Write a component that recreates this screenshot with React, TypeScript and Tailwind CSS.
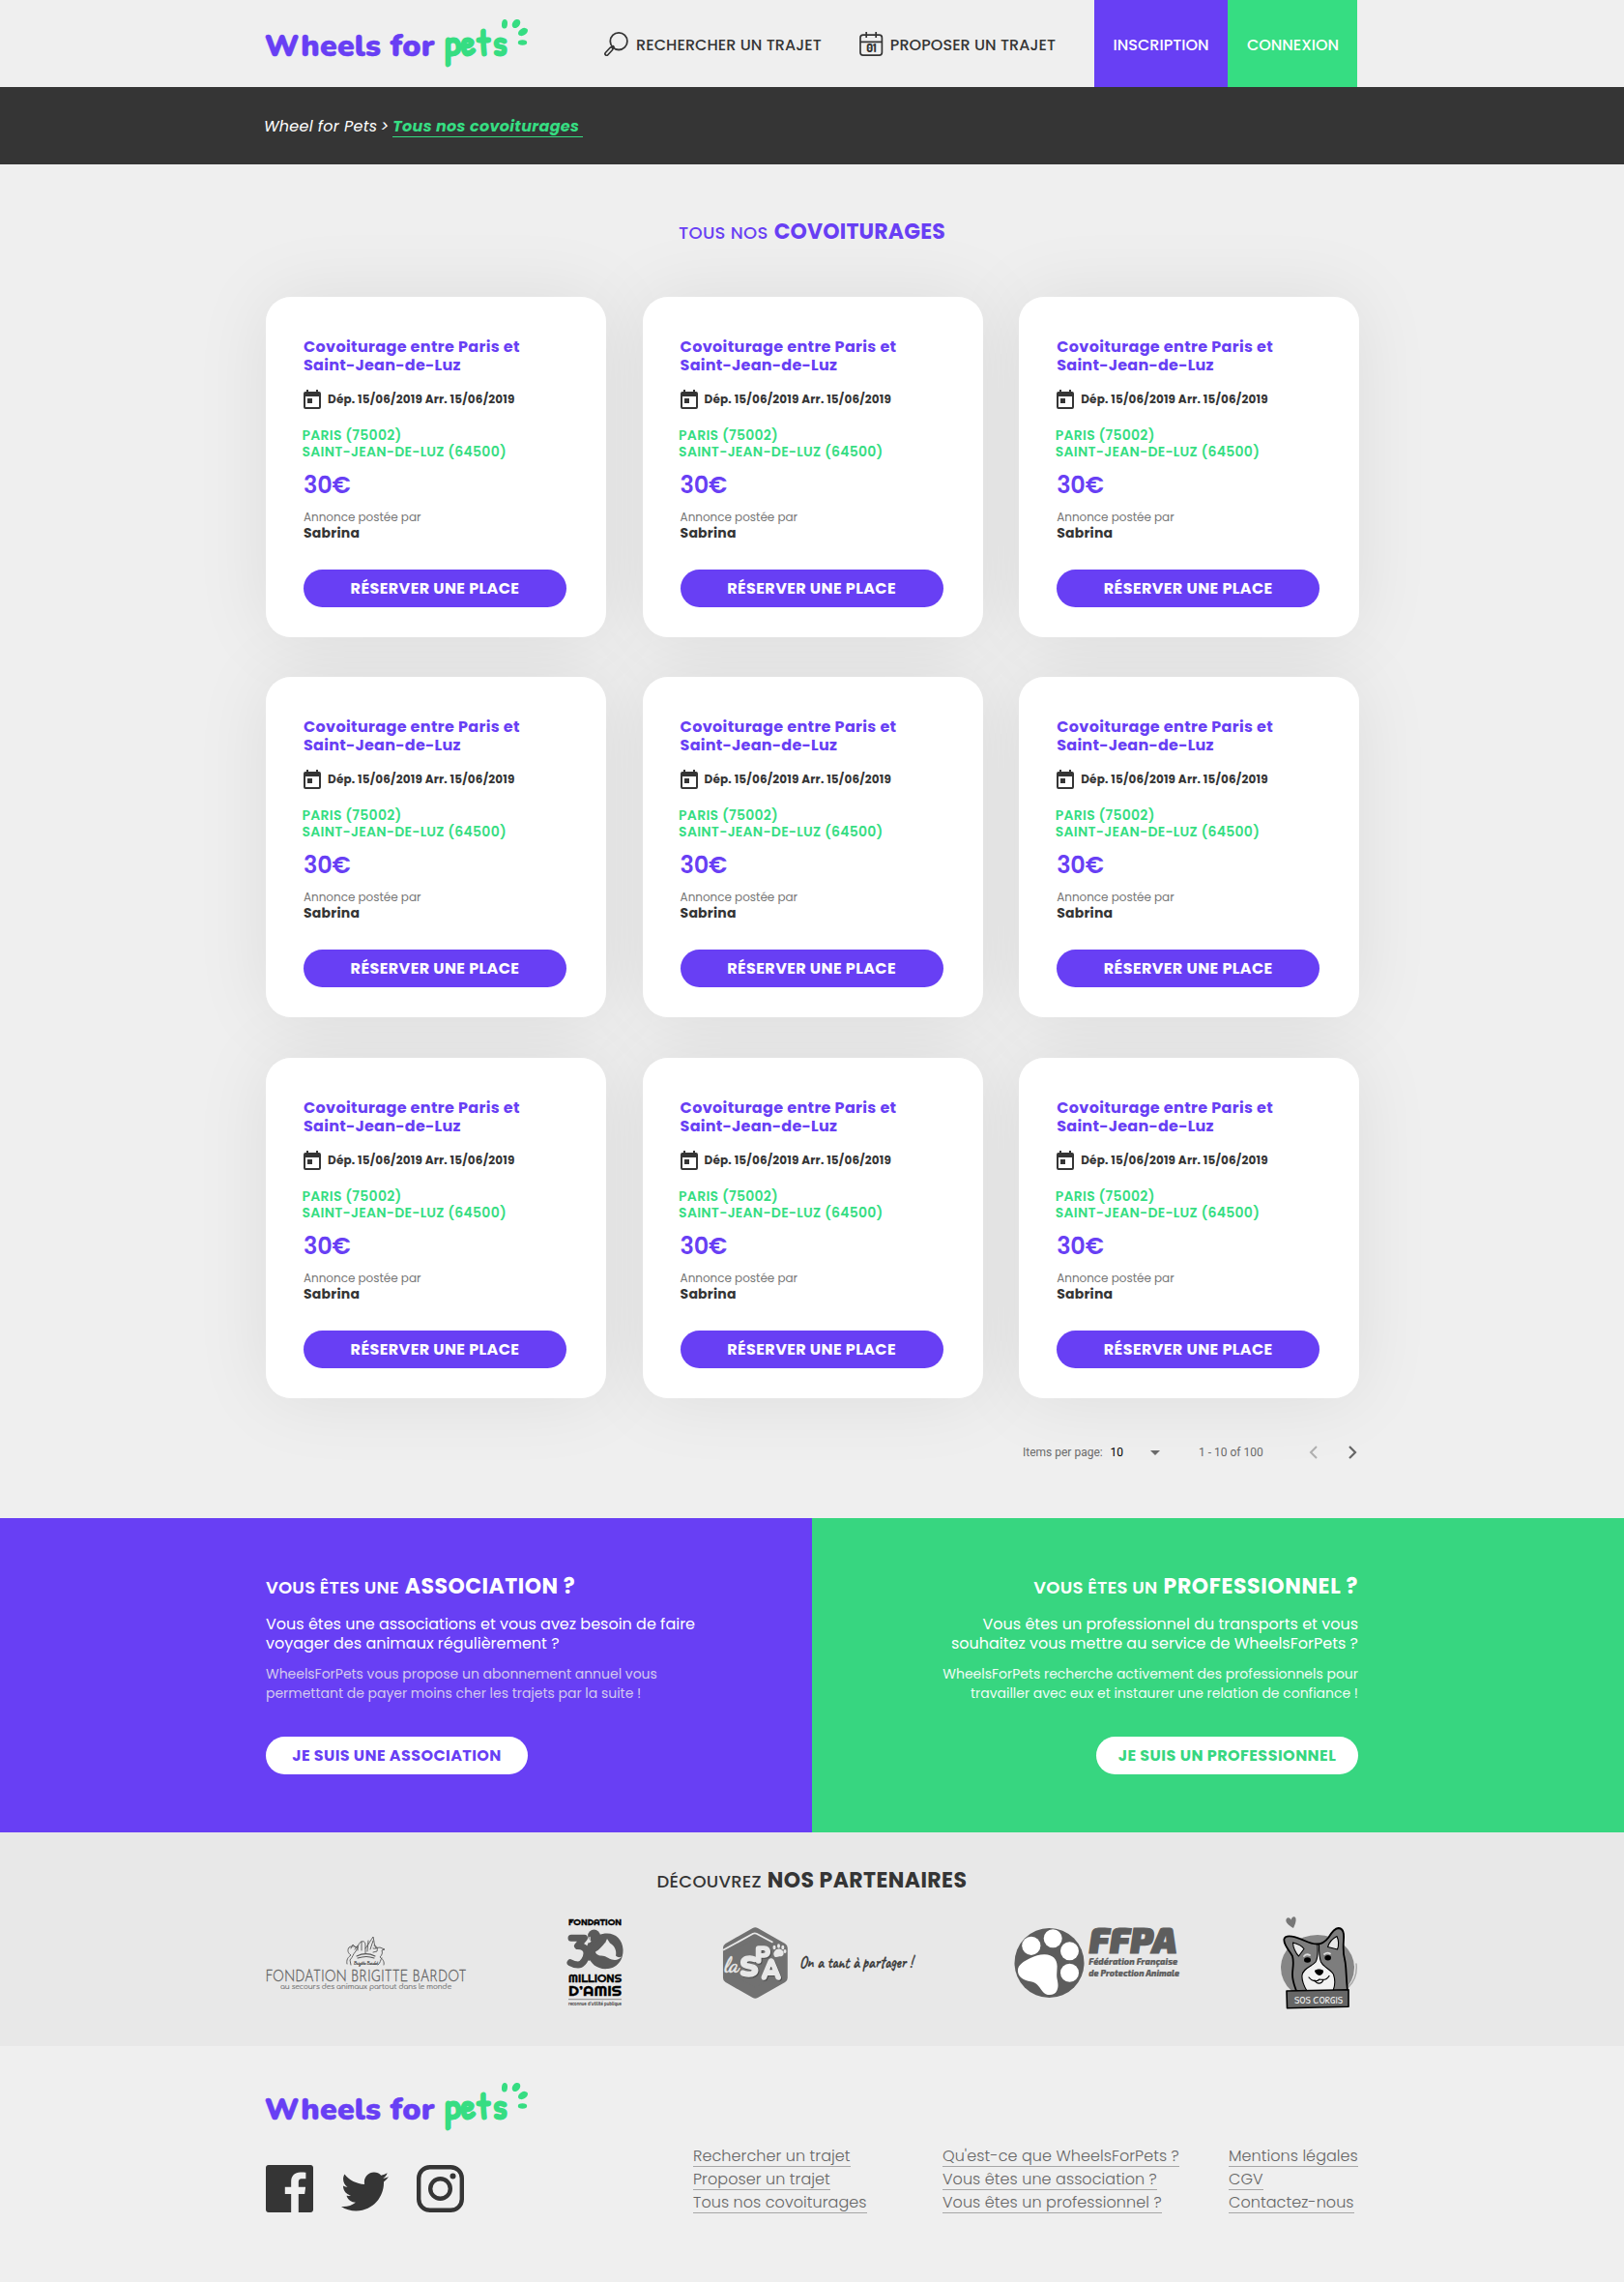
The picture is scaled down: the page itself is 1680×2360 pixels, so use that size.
import type { ReactNode } from 'react';
import { FaTwitter } from 'react-icons/fa';

function Logo() {
  return (
    <svg viewBox="0 0 280 54" className="-ml-[3px] block h-[54px] w-[280px] shrink-0 overflow-visible">
      <text x="1.6" y="40" textLength="176" className="fill-[#683ff4] stroke-[#683ff4] stroke-[0.4] font-[family-name:Nunito,Lato,sans-serif] text-[32px] font-black">
        Wheels for
      </text>
      <text
        x="188.5 205 221.5 238"
        y="39"
        className="fill-[#36dd82] stroke-[#36dd82] stroke-[2.8] font-[family-name:'Patrick_Hand',Nunito,cursive] text-[37px] [stroke-linejoin:round]"
      >
        pets
      </text>
      <g className="fill-[#36dd82]">
        <ellipse cx="250" cy="6.7" rx="3" ry="4.8" transform="rotate(5 250 6.7)" />
        <ellipse cx="262" cy="6.5" rx="3.8" ry="5" transform="rotate(38 262 6.5)" />
        <ellipse cx="269" cy="15" rx="3.6" ry="5.4" transform="rotate(60 269 15)" />
        <ellipse cx="268.5" cy="26" rx="4.7" ry="2.8" />
      </g>
    </svg>
  );
}

function SearchIcon() {
  return (
    <svg viewBox="0 0 25 25" className="h-[25px] w-[25px]" fill="none" strokeLinecap="round">
      <circle cx="15.1" cy="9.7" r="8.8" stroke="#353535" strokeWidth="1.8" />
      <path d="M9.2 15.6 7.6 17.2" stroke="#353535" strokeWidth="3.4" />
      <path d="M7.2 17.6 2.6 22.6" stroke="#353535" strokeWidth="5" />
      <path d="M7.2 17.6 2.6 22.6" stroke="#efefef" strokeWidth="1.7" />
    </svg>
  );
}

function CalendarIcon() {
  return (
    <svg viewBox="0 0 25 25" className="h-[25px] w-[25px]" fill="none" stroke="#353535" strokeWidth="1.7">
      <rect x="1" y="3.2" width="22.4" height="20.9" rx="2.8" />
      <path d="M1 10.4h22.4M7.2 0v6M17.2 0v6" />
      <text x="12.4" y="21.2" textAnchor="middle" stroke="none" className="fill-[#353535] font-[family-name:Dosis,Inter,sans-serif] text-[12px] font-extrabold">
        01
      </text>
    </svg>
  );
}

function DateIcon() {
  return (
    <svg viewBox="0 0 18 20" className="h-[20px] w-[18px]">
      <path
        fill="#353535"
        fillRule="evenodd"
        d="M3 0h2v2h8V0h2v2h1a2 2 0 0 1 2 2v14a2 2 0 0 1-2 2H2a2 2 0 0 1-2-2V4a2 2 0 0 1 2-2h1zM2 7v11h14V7zM4 9h5v5H4z"
      />
    </svg>
  );
}

function RideCard() {
  return (
    <li className="relative h-[352px] rounded-[26px] bg-white px-[39px] pt-[42px] nth-[n+7]:mt-px before:absolute before:inset-0 before:-z-10 before:rounded-[26px] before:shadow-[0_0_80px_rgba(0,0,0,0.08)] before:content-['']">
      <h3 className="text-[16px] leading-[19px] font-bold tracking-[0.35px] text-[#683ff4]">
        Covoiturage entre Paris et
        <br />
        <span className="tracking-[0.25px]">Saint-Jean-de-Luz</span>
      </h3>
      <div className="mt-4 flex items-center text-[12px] leading-[20px] font-bold tracking-[0.17px] text-[#353535]">
        <DateIcon />
        <span className="ml-[7px] whitespace-nowrap">Dép. 15/06/2019 Arr. 15/06/2019</span>
      </div>
      <p className="mt-[19px] -ml-[1.5px] text-[14px] leading-[17px] font-semibold tracking-[0.26px] text-[#36dd82]">
        PARIS (75002)
        <br />
        SAINT-JEAN-DE-LUZ (64500)
      </p>
      <p className="mt-[14px] text-[24px] leading-[24px] font-semibold tracking-[-0.2px] text-[#683ff4]">30€</p>
      <p className="mt-[13px] text-[12px] leading-[16px] tracking-[-0.03px] text-[#777]">Annonce postée par</p>
      <p className="text-[14px] leading-[16px] font-bold tracking-[0.2px] text-[#353535]">Sabrina</p>
      <button className="mt-[30px] h-[39px] w-[272px] rounded-full bg-[#683ff4] text-[16px] leading-[39px] font-bold tracking-[0.39px] text-white">
        RÉSERVER UNE PLACE
      </button>
    </li>
  );
}

function Pagination() {
  return (
    <div className="mt-[44px] ml-[783px] flex h-6 items-center font-[family-name:Roboto,sans-serif] text-[12px] text-[#6b6b6b]">
      <span className="w-[90.5px] whitespace-nowrap">Items per page:</span>
      <span className="w-[41.5px] text-black">10</span>
      <svg viewBox="0 0 10 5" className="h-[5px] w-[10px]" fill="#6b6b6b">
        <path d="M0 0h10L5 5z" />
      </svg>
      <span className="ml-[40px] w-[114px] whitespace-nowrap">1 - 10 of 100</span>
      <svg viewBox="0 0 9 14" className="h-[14px] w-[9px]" fill="none" stroke="#b0b0b0" strokeWidth="2">
        <path d="M8 1 2 7l6 6" />
      </svg>
      <svg viewBox="0 0 9 14" className="ml-[32px] h-[14px] w-[9px]" fill="none" stroke="#666" strokeWidth="2.2">
        <path d="m1 1 6 6-6 6" />
      </svg>
    </div>
  );
}

function BardotLogo() {
  return (
    <svg viewBox="0 0 208 100" className="h-[100px] w-[208px] overflow-visible" fill="none" stroke="#555" strokeWidth="0.9" strokeLinecap="round" strokeLinejoin="round">
      <path d="M84 50c-1-4 1-7 4-9-3-2-4-5-2-8 3-2 6-1 9 0l-2 4c-3 3-3 6-6 9l1 5M122 51c1-3-1-6-4-8 2-2 3-4 2-7l3-1-5-2c-3 0-5 2-7 1M120 44c-2 2-1 5-4 7M88 34l2-4 3 3" />
      <path d="M95 36c0-4 1-8 4-9 3-1 4 1 4 4v8M99 27v9M103 34c3-4 6-9 8-12 1 4 1 9 3 12M105 37l1-11M108 35l3-9M95 31l-3 4M112 31c3 0 4 3 3 6l-4 1" />
      <path d="M94 42c6-3 13-3 19 0M95 44c6-2 12-2 17 0" strokeWidth="1.1" />
      <text x="91" y="50.5" textLength="25" lengthAdjust="spacingAndGlyphs" stroke="#444" strokeWidth="0.2" className="fill-[#444] font-[family-name:'Dancing_Script',cursive] text-[5px] font-bold">
        Brigitte Bardot
      </text>
      <text x="-0.5" y="67.8" textLength="208" lengthAdjust="spacingAndGlyphs" stroke="#606060" strokeWidth="0.3" className="fill-[#606060] font-[family-name:'Josefin_Sans',Lato,sans-serif] text-[17px] font-light">
        FONDATION BRIGITTE BARDOT
      </text>
      <text x="15" y="76" textLength="177" lengthAdjust="spacingAndGlyphs" stroke="#808080" strokeWidth="0.2" className="fill-[#808080] font-[family-name:Comfortaa,Nunito,sans-serif] text-[7px]">
        au secours des animaux partout dans le monde
      </text>
    </svg>
  );
}

function MillionsLogo() {
  return (
    <svg viewBox="0 0 58 100" className="h-[100px] w-[58px] overflow-visible">
      <g className="fill-black stroke-black stroke-[0.35] font-[family-name:Righteous,Nunito,sans-serif]">
        <text x="1" y="9.8" textLength="55" lengthAdjust="spacingAndGlyphs" className="text-[9px]">FONDATION</text>
        <text x="1" y="69.3" textLength="55" lengthAdjust="spacingAndGlyphs" className="text-[11px]">MILLIONS</text>
        <text x="1" y="83.3" textLength="55" lengthAdjust="spacingAndGlyphs" className="text-[14.6px]">D’AMIS</text>
      </g>
      <path d="M4 23.3h13.5L10.5 31.5c6 0 9.5 3 9.5 7.6S16 51 11 51c-3.5 0-5.5-.7-8-2.2" fill="none" stroke="#5a5a5a" strokeWidth="7" strokeLinecap="round" strokeLinejoin="round" />
      <path d="M22 44c4 8 11 12 20 11C52 54 58 45 57.5 35 57 25 50 18.5 41 18.5c-3 0-6 .5-9 2L22 29z" fill="#5a5a5a" />
      <circle cx="27.5" cy="21" r="6.4" fill="#5a5a5a" />
      <path d="M24 29c-3 5-3 11 0 17" fill="none" stroke="#5a5a5a" strokeWidth="5" />
      <path d="M39 28.5 41 24l3 4.5c5 3 7 8 6 13 2 2 4 2 6 1-2 3-6 4-10 3-4-1-6-4-11-4-3 0-6-2-6-4 4-2 7-6 10-9.5z" fill="#e8e8e8" />
      <path d="M22 28c1.5-2 1.5-4 1-6" fill="none" stroke="#e8e8e8" strokeWidth="1.3" />
      <path d="M1 86.7h55" stroke="#888" strokeWidth="1" />
      <text x="1" y="92.6" textLength="55" lengthAdjust="spacingAndGlyphs" className="fill-[#333] font-[family-name:Nunito,sans-serif] text-[5px] font-bold">
        reconnue d’utilité publique
      </text>
    </svg>
  );
}

function SpaLogo() {
  return (
    <svg viewBox="1 0 197 100" className="h-[100px] w-[197px] overflow-visible">
      <path d="M33.3 17.5 61.5 33.5v31L33.3 80.5 5.2 64.5v-31z" fill="#717171" stroke="#717171" strokeWidth="10.5" strokeLinejoin="round" />
      <path d="M0 35.8 31 18.8q1.8-1 3.6 0L51.5 27.8" fill="none" stroke="#e8e8e8" strokeWidth="1.8" />
      <text x="1.5" y="58.3" textLength="15" lengthAdjust="spacingAndGlyphs" className="fill-[#e8e8e8] stroke-[#e8e8e8] stroke-[0.4] font-[family-name:'Dancing_Script',cursive] text-[23px] font-bold">
        la
      </text>
      <g
        fill="#e8e8e8"
        stroke="#e8e8e8"
        strokeWidth="1.4"
        strokeLinejoin="round"
        className="font-[family-name:Nunito,sans-serif] font-black drop-shadow-[1px_1px_0_#4d4d4d]"
      >
        <text x="17" y="63.2" className="text-[30px]">S</text>
        <text x="33" y="49" className="text-[23.5px]">P</text>
        <text x="39.8" y="65.5" textLength="20" lengthAdjust="spacingAndGlyphs" className="text-[29px]">A</text>
      </g>
      <g fill="#e8e8e8">
        <path d="M52.5 41c-1-3 2-6.5 5-6.5s6 2.5 5 5.5-3.5 2-5 2.5-4 1.500-5-1.500z" />
        <ellipse cx="53" cy="33" rx="1.5" ry="2.2" />
        <ellipse cx="57.5" cy="31.5" rx="1.5" ry="2.2" />
        <ellipse cx="61.8" cy="33" rx="1.5" ry="2.2" />
        <ellipse cx="64" cy="37" rx="1.5" ry="2" />
      </g>
      <text x="79" y="54" textLength="117" lengthAdjust="spacingAndGlyphs" className="fill-[#3c3c3c] stroke-[#3c3c3c] stroke-[0.25] font-[family-name:Caveat,cursive] text-[18.5px] font-bold">
        On a tant à partager !
      </text>
    </svg>
  );
}

function FfpaLogo() {
  return (
    <svg viewBox="0.5 0 171 100" className="h-[100px] w-[171px] overflow-visible">
      <circle cx="36" cy="49" r="36" fill="#5d5d5d" />
      <g fill="#fff">
        <circle cx="17.3" cy="31.3" r="9.6" />
        <circle cx="39.7" cy="23.7" r="9.5" />
        <circle cx="57" cy="36.7" r="9.5" />
        <circle cx="57" cy="59.3" r="9.5" />
        <path d="M3.4 57c0-6 6-9.5 13-13 5-2.5 10-4 15-3.8 8 .3 12.500 4.500 12.700 12 .1 5-1 9 0 13.500 1 5 1.500 8-.3 12-2.500 5.500-11 6-15 .5-3.500-5-6-9-12-10-7-1-13.400-4.500-13.400-11.200z" />
      </g>
      <g className="fill-[#5d5d5d] font-[family-name:'Exo_2','Open_Sans',sans-serif] italic">
        <text x="77" y="39" textLength="91" lengthAdjust="spacingAndGlyphs" stroke="#5d5d5d" strokeWidth="1.2" className="text-[36px] font-black">
          FFPA
        </text>
        <text x="76.7" y="50.7" textLength="92" lengthAdjust="spacingAndGlyphs" stroke="#5d5d5d" strokeWidth="0.2" className="text-[10px] font-extrabold">
          Fédération Française
        </text>
        <text x="76.7" y="62.7" textLength="94" lengthAdjust="spacingAndGlyphs" stroke="#5d5d5d" strokeWidth="0.2" className="text-[10px] font-extrabold">
          de Protection Animale
        </text>
      </g>
    </svg>
  );
}

function CorgiLogo() {
  return (
    <svg viewBox="0 0 80 100" className="h-[100px] w-[80px] overflow-visible" strokeLinejoin="round" strokeLinecap="round">
      <ellipse cx="38" cy="54" rx="38" ry="34" fill="#868686" />
      <path d="M78 50c1 9-2 18-8 24" fill="none" stroke="#a8a8a8" strokeWidth="1.5" />
      <path d="M13 13C8 10 4.5 7 5.5 4c1-2.5 4-2 5 .5C11.5 1 14.5 0 15.5 3c.6 3-1 7-2.500 10z" fill="#777" />
      <path
        d="M16 78c-2-6-4-10-4-17 0-7 2-12 0-19C9 36 2 30 3.5 24c2-5 12-2 21 2 5 2.300 8 3.500 13 3.500 6 0 9-3 12-7 3-5 6-9 10-9.500 5 0 6 5 5.500 12-.5 8-1 13 1 20 2 8 1 15 3 33z"
        fill="#7d7d7d"
        stroke="#000"
        strokeWidth="1.8"
      />
      <path d="M12.5 28c4 1 9 3 11.5 6.5L18.5 42c-3-3-6-9-6-14zM58 21.5c-4 2-8 6-9.5 11l10 2.5c1.5-4 1.5-9-.5-13.5z" fill="#e8e8e8" stroke="#000" strokeWidth="1.1" />
      <path d="M38 30c0 7 1 13-2 18-4 5-13 6-14 14-.5 6 2 11 5 16h27c2-5 2.5-11 .5-17-2-5-10-7-13-13-2-5-2-11-2-18z" fill="#f2f2f2" stroke="#000" strokeWidth="1.1" />
      <path d="M24 42q2.500-3 6-1M45 40q3-2.500 6-.5" fill="none" stroke="#ddd" strokeWidth="1.8" />
      <ellipse cx="27.5" cy="46" rx="3.5" ry="2.7" />
      <ellipse cx="48.7" cy="43.8" rx="3.3" ry="2.7" />
      <path d="M35 57c2-2 7-2 9 0 .5 2-2 5-4 5s-5-3-5-5z" />
      <path d="M29 64c3 4 8 5 11 2 4 1 8 0 10-3.500M35 67c2 4 7 4.500 9-.5" fill="none" stroke="#000" strokeWidth="1.2" />
      <path d="m6 78 64-1.300v17.500L6.500 95.800z" fill="#666" stroke="#000" strokeWidth="1.6" />
      <text x="14" y="90.5" textLength="50" lengthAdjust="spacingAndGlyphs" className="fill-[#f0f0f0] font-[family-name:'Patrick_Hand',Nunito,cursive] text-[10.5px]">
        SOS CORGIS
      </text>
    </svg>
  );
}

function FacebookIcon() {
  return (
    <svg viewBox="0 0 24 24" className="h-[49px] w-[49px]" fill="#353535">
      <path d="M22.676 0H1.324C.593 0 0 .593 0 1.324v21.352C0 23.408.593 24 1.324 24h11.494v-9.294H9.689v-3.621h3.129V8.410c0-3.099 1.894-4.785 4.659-4.785 1.325 0 2.464.097 2.796.141v3.240h-1.921c-1.500 0-1.792.721-1.792 1.771v2.311h3.584l-.465 3.630H16.560V24h6.115c.733 0 1.325-.592 1.325-1.324V1.324C24 .593 23.408 0 22.676 0" />
    </svg>
  );
}

function InstagramIcon() {
  return (
    <svg viewBox="0 0 49 49" className="h-[49px] w-[49px]" fill="none" stroke="#353535" strokeWidth="4.4">
      <rect x="2.2" y="2.2" width="44.6" height="44.6" rx="11.5" />
      <circle cx="24.5" cy="24.5" r="10.3" />
      <circle cx="37.5" cy="11.6" r="3" fill="#353535" stroke="none" />
    </svg>
  );
}

function SplitTitle({ light, bold, lightStyle, boldStyle }: { light: string; bold: string; lightStyle: string; boldStyle: string }) {
  return (
    <h2 className={`text-[22px] leading-[30px] font-bold whitespace-nowrap ${boldStyle}`}>
      <span className={`text-[18px] leading-none ${lightStyle}`}>{light}</span>
      {bold}
    </h2>
  );
}

function FooterLinks({ links, width }: { links: string[]; width: string }) {
  return (
    <ul className={width}>
      {links.map((link) => (
        <li key={link} className="flex h-6">
          <a className="h-[22px] border-b border-[#a6a6a6] text-[16px] leading-[21px] font-light tracking-[0.06px] whitespace-nowrap text-[#666]">{link}</a>
        </li>
      ))}
    </ul>
  );
}

function Container({ className, children }: { className: string; children: ReactNode }) {
  return <div className={`mx-auto w-[1130px] ${className}`}>{children}</div>;
}

export default function App() {
  return (
    <div className="w-[1680px] bg-[#efefef] font-[family-name:Poppins,Inter,sans-serif] text-[#353535]">
      <header>
        <Container className="flex h-[90px] items-center">
          <Logo />
          <nav className="ml-[73px] flex items-center pt-px text-[16px] leading-[24px] font-medium whitespace-nowrap">
            <SearchIcon />
            <span className="ml-2 pt-[3px] tracking-[0.07px]">RECHERCHER UN TRAJET</span>
            <span className="ml-[39px]">
              <CalendarIcon />
            </span>
            <span className="ml-[7px] pt-[3px] tracking-[0.07px]">PROPOSER UN TRAJET</span>
          </nav>
          <div className="mr-px ml-auto flex h-full text-center text-[16px] leading-[93px] font-medium text-white">
            <a className="w-[138px] bg-[#683ff4]">INSCRIPTION</a>
            <a className="w-[134px] bg-[#36dd82] pl-px">CONNEXION</a>
          </div>
        </Container>
      </header>

      <div className="bg-[#353535]">
        <Container className="flex h-[80px] items-start pt-[31px] text-[16px] leading-[20px] whitespace-nowrap text-white italic">
          <span className="-ml-[2px] tracking-[0.24px]">
            Wheel for Pets<span className="-ml-[2px]"> &gt;</span>
          </span>
          <a className="ml-[4px] border-b border-[#36dd82] font-bold tracking-[0.33px] text-[#36dd82]">Tous nos covoiturages&nbsp;</a>
        </Container>
      </div>

      <main className="h-[1400px] pt-[55px]">
        <div className="text-center text-[#683ff4]">
          <SplitTitle light="TOUS NOS" bold="COVOITURAGES" lightStyle="mr-[6px] font-medium tracking-[0.3px]" boldStyle="tracking-[0.18px]" />
        </div>
        <div className="ml-[275px] w-[1132px]">
          <ul className="isolate mt-[52px] grid grid-cols-[repeat(3,352px)] gap-x-[37.6px] gap-y-[41px]">
            {Array.from({ length: 9 }, (_, i) => (
              <RideCard key={i} />
            ))}
          </ul>
          <Pagination />
        </div>
      </main>

      <section className="flex h-[325px] text-white">
        <div className="w-[840px] bg-[#683ff4] pt-[56px] pl-[275px]">
          <SplitTitle light="VOUS ÊTES UNE" bold="ASSOCIATION ?" lightStyle="mr-[6px] font-semibold tracking-[0.22px]" boldStyle="tracking-[0.5px]" />
          <p className="mt-[14px] text-[16px] leading-[20px]">
            Vous êtes une associations et vous avez besoin de faire
            <br />
            voyager des animaux régulièrement ?
          </p>
          <p className="mt-[11px] text-[14px] leading-[20px] tracking-[-0.02px] text-[#d3c9ee]">
            WheelsForPets vous propose un abonnement annuel vous
            <br />
            permettant de payer moins cher les trajets par la suite !
          </p>
          <button className="mt-[35px] h-[39px] w-[271px] rounded-full bg-white text-[16px] leading-[39px] font-bold tracking-[0.4px] text-[#683ff4]">
            JE SUIS UNE ASSOCIATION
          </button>
        </div>
        <div className="w-[840px] bg-[#37d680] pt-[56px] pr-[275px] text-right">
          <SplitTitle light="VOUS ÊTES UN" bold="PROFESSIONNEL ?" lightStyle="mr-[6px] font-semibold tracking-[0.25px]" boldStyle="tracking-[0.62px]" />
          <p className="mt-[14px] text-[16px] leading-[20px]">
            Vous êtes un professionnel du transports et vous
            <br />
            souhaitez vous mettre au service de WheelsForPets ?
          </p>
          <p className="mt-[11px] text-[14px] leading-[20px] tracking-[-0.02px] text-[#effcf4]">
            WheelsForPets recherche activement des professionnels pour
            <br />
            travailler avec eux et instaurer une relation de confiance !
          </p>
          <button className="mt-[35px] h-[39px] w-[271px] rounded-full bg-white text-[16px] leading-[39px] font-bold tracking-[0.45px] text-[#37d680]">
            JE SUIS UN PROFESSIONNEL
          </button>
        </div>
      </section>

      <section className="h-[221px] bg-[#e8e8e8] pt-[35px]">
        <div className="text-center">
          <SplitTitle light="DÉCOUVREZ" bold="NOS PARTENAIRES" lightStyle="mr-[6px] font-medium tracking-[0.25px]" boldStyle="tracking-[0.42px]" />
        </div>
        <Container className="mt-[20.5px] flex justify-between">
          <BardotLogo />
          <MillionsLogo />
          <SpaLogo />
          <FfpaLogo />
          <CorgiLogo />
        </Container>
      </section>

      <footer className="h-[244px]">
        <Container className="flex">
          <div className="w-[442px] shrink-0 pt-[36px]">
            <Logo />
            <div className="mt-[33px] flex items-start">
              <FacebookIcon />
              <FaTwitter className="mt-[3px] ml-[29px] h-[49px] w-[49px] text-[#353535]" />
              <span className="ml-[29px]">
                <InstagramIcon />
              </span>
            </div>
          </div>
          <div className="flex pt-[103px]">
            <FooterLinks width="w-[258px]" links={['Rechercher un trajet', 'Proposer un trajet', 'Tous nos covoiturages']} />
            <FooterLinks width="w-[296px]" links={["Qu'est-ce que WheelsForPets ?", 'Vous êtes une association ?', 'Vous êtes un professionnel ?']} />
            <FooterLinks width="w-[134px]" links={['Mentions légales', 'CGV', 'Contactez-nous']} />
          </div>
        </Container>
      </footer>
    </div>
  );
}
